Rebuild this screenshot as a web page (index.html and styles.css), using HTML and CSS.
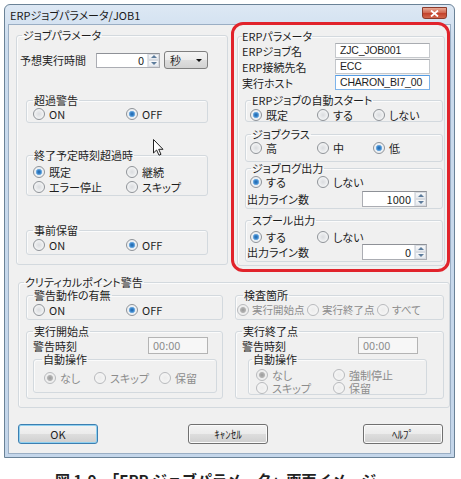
FILE: index.html
```html
<!DOCTYPE html>
<html lang="ja">

<head>
	<meta charset="utf-8">
	<title>ERPジョブパラメータ/JOB1</title>
	<link rel="stylesheet" href="styles.css">
</head>

<body>
	<div class="window">
		<div class="titlebar">
			<span class="title">ERPジョブパラメータ/JOB1</span>
			<span class="close">
				<svg width="9" height="7" viewBox="0 0 9 7"><path d="M1 0.5 8 6.5M8 0.5 1 6.5" stroke="#fff" stroke-width="1.8" fill="none"/></svg>
			</span>
		</div>

		<div class="client">
			<div class="top">
				<!-- left: job settings -->
				<fieldset class="group job">
					<legend>ジョブパラメータ</legend>
					<div class="row est">
						<span class="lbl">予想実行時間</span>
						<span class="spin est-spin"><span class="val">0</span><span class="arrows"><i class="up"></i><i class="down"></i></span></span>
						<span class="select">秒<i class="caret"></i></span>
					</div>

					<fieldset class="group sub over">
						<legend>超過警告</legend>
						<div class="radios cols2">
							<span class="radio">ON</span>
							<span class="radio on">OFF</span>
						</div>
					</fieldset>

					<fieldset class="group sub late">
						<legend>終了予定時刻超過時</legend>
						<div class="radios cols2 rows15">
							<span class="radio on">既定</span>
							<span class="radio">継続</span>
							<span class="radio">エラー停止</span>
							<span class="radio">スキップ</span>
						</div>
					</fieldset>

					<fieldset class="group sub hold">
						<legend>事前保留</legend>
						<div class="radios cols2">
							<span class="radio">ON</span>
							<span class="radio on">OFF</span>
						</div>
					</fieldset>
				</fieldset>

				<!-- right: ERP settings, outlined in red -->
				<div class="mark">
					<fieldset class="group erp">
						<legend>ERPパラメータ</legend>
						<div class="field"><span>ERPジョブ名</span><span class="text">ZJC_JOB001</span></div>
						<div class="field"><span>ERP接続先名</span><span class="text">ECC</span></div>
						<div class="field"><span>実行ホスト</span><span class="text focus">CHARON_BI7_00</span></div>

						<fieldset class="group opt auto">
							<legend>ERPジョブの自動スタート</legend>
							<div class="radios cols3">
								<span class="radio on">既定</span>
								<span class="radio">する</span>
								<span class="radio">しない</span>
							</div>
						</fieldset>

						<fieldset class="group opt cls">
							<legend>ジョブクラス</legend>
							<div class="radios cols3">
								<span class="radio">高</span>
								<span class="radio">中</span>
								<span class="radio on">低</span>
							</div>
						</fieldset>

						<fieldset class="group opt log">
							<legend>ジョブログ出力</legend>
							<div class="radios cols3">
								<span class="radio on">する</span>
								<span class="radio">しない</span>
							</div>
							<div class="lines log-lines">
								<span>出力ライン数</span>
								<span class="spin line-spin"><span class="val">1000</span><span class="arrows"><i class="up"></i><i class="down"></i></span></span>
							</div>
						</fieldset>

						<fieldset class="group opt spool">
							<legend>スプール出力</legend>
							<div class="radios cols3">
								<span class="radio on">する</span>
								<span class="radio">しない</span>
							</div>
							<div class="lines">
								<span>出力ライン数</span>
								<span class="spin line-spin"><span class="val">0</span><span class="arrows"><i class="up"></i><i class="down"></i></span></span>
							</div>
						</fieldset>
					</fieldset>
				</div>
			</div>

			<!-- critical point warning -->
			<fieldset class="group crit">
				<legend>クリティカルポイント警告</legend>
				<div class="crit-grid">
					<fieldset class="group sub warn">
						<legend>警告動作の有無</legend>
						<div class="radios cols2">
							<span class="radio">ON</span>
							<span class="radio on">OFF</span>
						</div>
					</fieldset>

					<fieldset class="group sub check">
						<legend>検査箇所</legend>
						<div class="radios cols-check">
							<span class="radio on off">実行開始点</span>
							<span class="radio off">実行終了点</span>
							<span class="radio off">すべて</span>
						</div>
					</fieldset>

					<fieldset class="group sub point">
						<legend>実行開始点</legend>
						<div class="row time-row">
							<span>警告時刻</span>
							<span class="time">00:00</span>
						</div>
						<fieldset class="group act act-start">
							<legend>自動操作</legend>
							<div class="radios cols-act">
								<span class="radio on off">なし</span>
								<span class="radio off">スキップ</span>
								<span class="radio off">保留</span>
							</div>
						</fieldset>
					</fieldset>

					<fieldset class="group sub point point-end">
						<legend>実行終了点</legend>
						<div class="row time-row">
							<span>警告時刻</span>
							<span class="time">00:00</span>
						</div>
						<fieldset class="group act act-end">
							<legend>自動操作</legend>
							<div class="radios cols-act2">
								<span class="radio on off">なし</span>
								<span class="radio off">強制停止</span>
								<span class="radio off">スキップ</span>
								<span class="radio off">保留</span>
							</div>
						</fieldset>
					</fieldset>
				</div>
			</fieldset>

			<div class="buttons">
				<span class="btn default">OK</span>
				<span class="btn cancel">ｷｬﾝｾﾙ</span>
				<span class="btn help">ﾍﾙﾌﾟ</span>
			</div>

			<!-- mouse pointer -->
			<svg class="pointer" width="12" height="17" viewBox="0 0 12 17">
				<path d="M0.5 0.5V14L3.6 11L6 16.2 8 15.3 5.7 10.3H10Z" fill="#fff" stroke="#222" stroke-width="1" stroke-linejoin="round"/>
			</svg>
		</div>
	</div>

	<p class="caption">図 1-9　「ERP ジョブパラメータ」画面イメージ</p>
</body>

</html>
```

FILE: styles.css
```css
* {
	box-sizing: border-box;
}

body {
	margin: 0;
	width: 461px;
	height: 479px;
	overflow: hidden;
	background-color: #fff;
	font-family: "Noto Sans CJK JP", "Noto Sans", sans-serif;
	font-size: 11px;
	line-height: 12px;
	color: #1e1e1e;
	font-feature-settings: "palt";
}

/* window frame */
.window {
	margin: 4px 0 0 4px;
	width: 451px;
	height: 454px;
	border: 1px solid #6a8297;
	border-radius: 6px 6px 0 0;
	background: linear-gradient(#dde8f4, #cbdcee 40px, #c4d6ea);
	padding: 0 3px 3px;
	display: flex;
	flex-direction: column;
}

.titlebar {
	height: 19px;
	flex: none;
	display: flex;
	align-items: flex-start;
	padding-left: 2px;
}

.title {
	margin-top: 4px;
	color: #1a1a1a;
}

.close {
	margin: 2px 4px 0 auto;
	width: 25px;
	height: 12px;
	border: 1px solid #8b3b2c;
	border-radius: 0 0 3px 3px;
	background: linear-gradient(#e9a995, #d0634c 50%, #c2402a 51%, #d2664c);
	display: flex;
	align-items: center;
	justify-content: center;
}

.client {
	flex: 1;
	position: relative;
	background-color: #f0f0f0;
	border: 1px solid #9aaec4;
}

/* group boxes */
fieldset.group {
	margin: 0;
	min-width: 0;
	border: 1px solid #d3d9de;
	border-radius: 3px;
	box-shadow: inset 1px 1px 0 #fbfbfb;
}

legend {
	padding: 0 1px;
	line-height: 12px;
}

.top {
	display: flex;
	align-items: flex-start;
	gap: 3px;
	padding-left: 7px;
}

.job {
	width: 212px;
	margin-top: 4px !important;
	padding: 10px 3px 9px;
}

.job > legend {
	margin-left: 2px;
}

.row {
	display: flex;
	align-items: center;
}

.est {
	height: 18px;
}

.est .lbl {
	width: 76px;
}

/* spin box */
.spin {
	display: flex;
	height: 15px;
	border: 1px solid #abadb3;
	border-top-color: #8e9197;
	background-color: #fff;
}

.spin .val {
	flex: 1;
	text-align: right;
	padding-right: 3px;
	line-height: 13px;
}

.arrows {
	width: 12px;
	display: flex;
	flex-direction: column;
	border-left: 1px solid #e0e3e8;
}

.arrows i {
	flex: 1;
	display: flex;
	align-items: center;
	justify-content: center;
	background: linear-gradient(#f8f9fa, #e6e9ee);
	border: 1px solid #d7dbe1;
}

.arrows i::after {
	content: "";
	border-left: 3px solid transparent;
	border-right: 3px solid transparent;
}

.arrows .up::after {
	border-bottom: 3px solid #5d7c9c;
}

.arrows .down::after {
	border-top: 3px solid #5d7c9c;
}

.est-spin {
	width: 64px;
}

.select {
	margin-left: 4px;
	width: 44px;
	height: 18px;
	border: 1px solid #7f7f7f;
	border-radius: 3px;
	background: linear-gradient(#f4f4f4, #ececec 50%, #dedede 51%, #d2d2d2);
	display: flex;
	align-items: center;
	padding-left: 5px;
}

.caret {
	margin: 1px 5px 0 auto;
	border-left: 3px solid transparent;
	border-right: 3px solid transparent;
	border-top: 3px solid #111;
}

/* inner groups on the left */
.sub {
	padding: 1px 5px 2px 6px;
}

.over,
.late,
.hold {
	width: 182px;
	margin-left: 6px !important;
}

.over {
	margin-top: 25px !important;
}

.late {
	margin-top: 26px !important;
	padding-top: 3px;
	padding-bottom: 1px;
}

.hold {
	margin-top: 28px !important;
	padding-top: 2px;
	padding-bottom: 3px;
}

/* radio buttons */
.radios {
	display: grid;
	grid-auto-rows: 13px;
}

.cols2 {
	grid-template-columns: 93px auto;
}

.cols3 {
	grid-template-columns: 67px 56px auto;
}

.rows15 {
	grid-auto-rows: 15px;
}

.radio {
	display: flex;
	align-items: center;
	gap: 4px;
	white-space: nowrap;
}

.radio::before {
	content: "";
	flex: none;
	width: 10px;
	height: 10px;
	border-radius: 50%;
	border: 1px solid #8f9398;
	background: radial-gradient(circle, #dadcdf 0, #f3f4f5 70%, #fff);
}

.radio.on::before {
	background: radial-gradient(circle, #1f62a6 0, #3d8ad0 2px, #8cbbe4 3px, #e9eef3 3.5px, #f7f7f7);
}

.radio.off {
	color: #8c8c8c;
}

.radio.off::before {
	border-color: #b8babd;
	background: radial-gradient(circle, #ececec 0, #f6f6f6 80%);
}

.radio.on.off::before {
	background: radial-gradient(circle, #9a9a9a 0, #b3b3b3 2.5px, #ececec 3.5px, #f6f6f6);
}

/* red outline around the ERP block */
.mark {
	width: 219px;
	margin-top: -3px;
	border: 3px solid #e1232b;
	border-radius: 12px;
	padding: 5px 2px 3px 3px;
}

.erp {
	width: 208px;
	padding: 1px 4px 3px;
}

.erp > legend {
	padding: 0;
}

.field {
	display: grid;
	grid-template-columns: 93px 95px;
	height: 16px;
	align-items: start;
}

.field span:first-child {
	line-height: 16px;
}

.text {
	height: 15px;
	border: 1px solid #c5c8cc;
	border-top-color: #a9acb1;
	background-color: #fff;
	padding-left: 4px;
	line-height: 13px;
	font-family: "Liberation Sans", Arial, sans-serif;
	font-size: 10.5px;
	letter-spacing: -0.2px;
	white-space: nowrap;
	overflow: hidden;
}

.text.focus {
	border-color: #7eb4ea;
	border-top-color: #569de5;
}

.opt {
	width: 198px;
	margin-left: 3px !important;
	padding: 1px 4px 0;
}

.opt > legend {
	margin-left: 1px;
}

.auto {
	margin-top: 3px !important;
	padding-top: 2px;
}

.cls {
	margin-top: 6px !important;
	padding-bottom: 7px;
}

.log {
	padding-bottom: 1px;
}

.spool {
	margin-top: 5px !important;
	padding-top: 4px;
	padding-bottom: 1px;
}

.lines {
	display: flex;
	align-items: center;
	height: 16px;
	margin-top: 1px;
	margin-left: -3px;
}

.log-lines {
	margin-top: 3px;
}

.line-spin {
	width: 65px;
	height: 16px;
	margin: 0 11px 0 auto;
}

.line-spin .val {
	line-height: 14px;
}

/* critical point group */
.crit {
	margin: 4px 0 0 9px !important;
	width: 432px;
	padding: 0 4px 8px 7px;
}

.crit > legend {
	margin-left: -2px;
}

.crit-grid {
	display: grid;
	grid-template-columns: 197px 209px;
	column-gap: 12px;
	row-gap: 5px;
	margin-top: 1px;
}

.warn {
	padding: 2px 5px 3px 6px;
}

.check {
	padding: 2px 2px 3px 1px;
}

.check > legend {
	margin-left: 6px;
}

.cols-check {
	grid-template-columns: 70px 70px auto;
	gap: 0;
	font-size: 10.5px;
}

.cols-check .radio {
	gap: 3px;
}

.point {
	padding: 0 5px 5px 6px;
}

.point-end {
	padding-bottom: 3px;
}

.time-row {
	height: 17px;
}

.time {
	margin: 0 9px 0 auto;
	width: 60px;
	height: 17px;
	border: 1px solid #b4b4b4;
	background-color: #f7f7f7;
	color: #8c8c8c;
	padding-left: 4px;
	line-height: 15px;
	font-feature-settings: normal;
}

.point-end .time {
	margin-right: 20px;
}

.act {
	margin-top: -1px !important;
	padding: 6px 8px 8px 10px;
}

.act > legend {
	margin-left: -2px;
}

.act-start {
	width: 184px;
}

.act-end {
	width: 179px;
	margin-left: 6px !important;
	padding: 3px 4px 0 7px;
}

.act-end > legend {
	margin-left: -4px;
}

.cols-act {
	grid-template-columns: 50px 65px auto;
}

.cols-act2 {
	grid-template-columns: 77px auto;
}

/* dialog buttons */
.buttons {
	display: flex;
	margin-top: 16px;
	padding-left: 9px;
}

.btn {
	width: 80px;
	height: 20px;
	border: 1px solid #707070;
	border-radius: 3px;
	background: linear-gradient(#f3f3f3, #ebebeb 50%, #dddddd 51%, #cfcfcf);
	box-shadow: inset 0 0 0 1px #fbfbfb;
	display: flex;
	align-items: center;
	justify-content: center;
	font-feature-settings: normal;
}

.btn.default {
	border-color: #3c7fb1;
	box-shadow: inset 0 0 0 1px #8fd0f0;
}

.cancel {
	margin-left: 90px;
}

.help {
	margin-left: 95px;
}

.pointer {
	position: absolute;
	left: 144px;
	top: 114px;
}

.caption {
	margin: 14px 0 0;
	padding-left: 55px;
	font-size: 15px;
	line-height: 15px;
	font-weight: bold;
	white-space: nowrap;
	color: #222;
	font-feature-settings: normal;
}
```
